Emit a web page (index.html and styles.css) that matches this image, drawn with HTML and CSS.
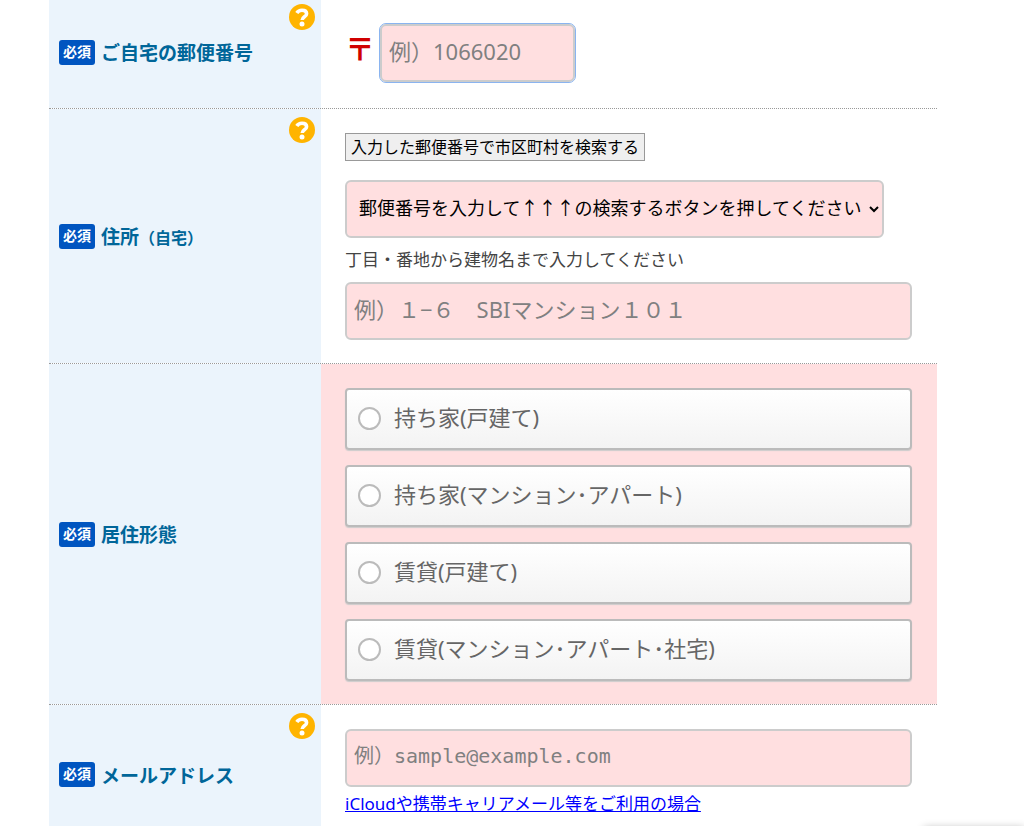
FILE: index.html
```html
<!DOCTYPE html>
<html lang="ja">
<head>
  <meta charset="UTF-8">
  <meta name="viewport" content="width=device-width, initial-scale=1">
  <title>お客さま情報の入力</title>
  <link rel="stylesheet" href="styles.css">
</head>
<body>
  <svg class="sprite" aria-hidden="true">
    <symbol id="icon-help" viewBox="0 0 26 26">
      <circle cx="13" cy="13" r="13" fill="#ffb400"/>
      <path d="M7.8 9C9 7 10.6 6.2 13 6.2c2.8 0 4.6 1.4 4.6 3.5 0 3.1-4.4 3.1-4.4 6.3" fill="none" stroke="#fff" stroke-width="3.6"/>
      <circle cx="13" cy="20" r="2.5" fill="#fff"/>
    </symbol>
  </svg>

  <form class="entry-form" action="#">
    <div class="row">
      <div class="row-head">
        <span class="required">必須</span>
        <label class="title" for="zip">ご自宅の郵便番号</label>
        <button type="button" class="btn-help" aria-label="ヘルプ"><svg><use href="#icon-help"/></svg></button>
      </div>
      <div class="row-body zip">
        <span class="zip-mark">〒</span>
        <input type="text" id="zip" class="field field-zip" placeholder="例）1066020">
      </div>
    </div>

    <div class="row">
      <div class="row-head">
        <span class="required">必須</span>
        <label class="title" for="city">住所<small>（自宅）</small></label>
        <button type="button" class="btn-help" aria-label="ヘルプ"><svg><use href="#icon-help"/></svg></button>
      </div>
      <div class="row-body">
        <button type="button" class="btn-search">入力した郵便番号で市区町村を検索する</button>
        <select id="city" class="field field-city">
          <option>郵便番号を入力して↑↑↑の検索するボタンを押してください</option>
        </select>
        <label class="note" for="address">丁目・番地から建物名まで入力してください</label>
        <input type="text" id="address" class="field" placeholder="例）１−６　SBIマンション１０１">
      </div>
    </div>

    <div class="row" role="radiogroup" aria-labelledby="house-title">
      <div class="row-head">
        <span class="required">必須</span>
        <span class="title" id="house-title">居住形態</span>
      </div>
      <div class="row-body choices">
        <label class="choice"><input type="radio" name="house"><span>持ち家(戸建て)</span></label>
        <label class="choice"><input type="radio" name="house"><span>持ち家(マンション･アパート)</span></label>
        <label class="choice"><input type="radio" name="house"><span>賃貸(戸建て)</span></label>
        <label class="choice"><input type="radio" name="house"><span>賃貸(マンション･アパート･社宅)</span></label>
      </div>
    </div>

    <div class="row">
      <div class="row-head">
        <span class="required">必須</span>
        <label class="title" for="mail">メールアドレス</label>
        <button type="button" class="btn-help" aria-label="ヘルプ"><svg><use href="#icon-help"/></svg></button>
      </div>
      <div class="row-body">
        <input type="email" id="mail" class="field field-mail" placeholder="例）sample@example.com">
        <a href="#" class="mail-link">iCloudや携帯キャリアメール等をご利用の場合</a>
      </div>
    </div>
  </form>

  <div class="float-panel"></div>
</body>
</html>
```
FILE: styles.css
```css
* {
  box-sizing: border-box;
}
body {
  margin: 0;
  padding: 0 87px 0 49px;
  background: #fff;
  color: #444;
  font-family: "Noto Sans", "Noto Sans CJK JP", sans-serif;
  font-size: 17px;
  overflow: hidden;
}
.sprite {
  display: none;
}
.entry-form {
  margin-top: -4px;
}

/* 行 */
.row {
  display: flex;
  border-bottom: 1px dotted #999;
}
.row:first-child {
  min-height: 113px;
}
.row-head {
  position: relative;
  flex: 0 0 272px;
  display: flex;
  align-items: center;
  gap: 6px;
  padding: 0 10px;
  background: #ebf4fc;
}
.row-body {
  flex: 1;
  display: flex;
  flex-direction: column;
  align-items: flex-start;
  padding: 24px 25px 23px 24px;
}
.required {
  width: 36px;
  height: 25px;
  border-radius: 3px;
  background: #0055c0;
  color: #fff;
  font-size: 14px;
  font-weight: 700;
  line-height: 24px;
  text-align: center;
}
.title {
  color: #006699;
  font-family: "Noto Sans CJK JP", sans-serif;
  font-size: 19px;
  font-weight: 700;
  line-height: 28px;
}
.title small {
  font-size: 16px;
}
.btn-help {
  position: absolute;
  top: 8px;
  right: 6px;
  width: 26px;
  height: 26px;
  padding: 0;
  border: none;
  background: none;
  cursor: pointer;
}
.btn-help svg {
  display: block;
  width: 26px;
  height: 26px;
}

/* 入力欄 */
.field {
  width: 100%;
  height: 58px;
  padding: 0 7px 4px;
  border: 2px solid #ccc;
  border-radius: 6px;
  background-color: #ffdfe0;
  font-family: "Noto Sans", "Noto Sans CJK JP", sans-serif;
  font-size: 22px;
}
.field::placeholder {
  color: #808080;
}
.zip {
  flex-direction: row;
  align-items: center;
}
.zip-mark {
  width: 35px;
  padding-bottom: 8px;
  color: #d00000;
  font-size: 30px;
  font-weight: 700;
  line-height: 40px;
}
.field-zip {
  width: 195px;
  outline: 1px solid #8ab4f0;
}
.btn-search {
  height: 28px;
  margin-bottom: 19px;
  padding: 0 5px 2px;
  border: 1px solid #999;
  background: #efefef;
  color: #000;
  font-family: "Noto Sans CJK JP", sans-serif;
  font-size: 16px;
  line-height: 24px;
}
.field-city {
  width: 95%;
  padding: 0 4px 4px 8px;
  color: #000;
  font-family: "Noto Sans CJK JP", sans-serif;
  font-size: 18px;
}
.note {
  line-height: 44px;
}
.field-mail {
  font-family: "DejaVu Sans Mono", "Noto Sans CJK JP", monospace;
  font-size: 20px;
}
.mail-link {
  color: #00f;
  line-height: 34px;
}

/* 居住形態 */
.choices {
  gap: 15px;
  background: #ffdfe0;
}
.choice {
  display: flex;
  align-items: center;
  width: 100%;
  height: 62px;
  padding: 0 11px 2px;
  border: 2px solid #bbb;
  border-radius: 4px;
  background: linear-gradient(#fff, #f3f3f3);
  box-shadow: 0 1px 1px #ccc;
  color: #666;
  font-size: 22px;
  cursor: pointer;
}
.choice span {
  padding-bottom: 4px;
}
.choice input {
  appearance: none;
  width: 23px;
  height: 23px;
  margin: 0 13px 0 0;
  border: 2px solid #bbb;
  border-radius: 50%;
  background: #fff;
}
.choice input:checked {
  background: radial-gradient(#0055c0 40%, #fff 45%);
}

/* 画面下の固定パネル */
.float-panel {
  position: fixed;
  right: 0;
  bottom: -60px;
  width: 100px;
  height: 58px;
  background: #fff;
  box-shadow: 0 0 8px rgba(0, 0, 0, 0.3);
}
```
